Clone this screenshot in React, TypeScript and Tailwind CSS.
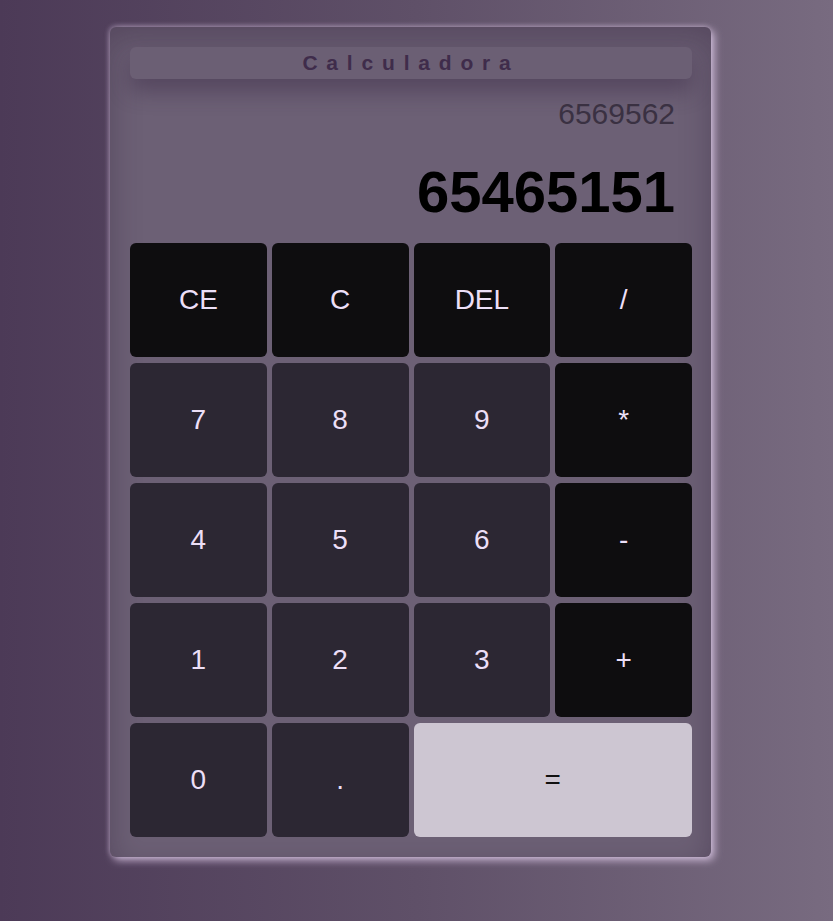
import React from 'react';

const keys: { label: string; kind: 'op' | 'num' | 'eq'; span?: boolean }[] = [
  { label: 'CE', kind: 'op' },
  { label: 'C', kind: 'op' },
  { label: 'DEL', kind: 'op' },
  { label: '/', kind: 'op' },
  { label: '7', kind: 'num' },
  { label: '8', kind: 'num' },
  { label: '9', kind: 'num' },
  { label: '*', kind: 'op' },
  { label: '4', kind: 'num' },
  { label: '5', kind: 'num' },
  { label: '6', kind: 'num' },
  { label: '-', kind: 'op' },
  { label: '1', kind: 'num' },
  { label: '2', kind: 'num' },
  { label: '3', kind: 'num' },
  { label: '+', kind: 'op' },
  { label: '0', kind: 'num' },
  { label: '.', kind: 'num' },
  { label: '=', kind: 'eq', span: true },
];

const kindClass = {
  op: 'bg-[#0e0d0f] text-[#ecdff7]',
  num: 'bg-[#2c2733] text-[#ecdff7]',
  eq: 'bg-[#cdc6d2] text-[#111]',
};

export default function App() {
  return (
    <div className="min-h-screen w-full bg-gradient-to-r from-[#4c3a57] via-[#5f5068] to-[#786b80] pt-[27px] pl-[110px] font-['Liberation_Sans',Arial,sans-serif]">
      <div className="w-[601px] rounded-md bg-[#6c6075] pl-5 pr-[19px] pt-5 pb-5 shadow-[3px_3px_8px_rgba(225,205,235,0.85),-1px_-1px_5px_rgba(225,205,235,0.35),inset_0_12px_30px_rgba(45,30,55,0.35)]">
        {/* title */}
        <div className="h-8 rounded-md bg-[#6b5f74] flex items-center justify-center shadow-[0_12px_22px_rgba(55,38,66,0.45)]">
          <span className="text-[21px] font-bold tracking-[0.42em] text-[#3f2c4b]">Calculadora</span>
        </div>

        {/* display */}
        <div className="h-[164px] pr-[17px] flex flex-col items-end">
          <div className="mt-[20px] text-[30px] leading-[30px] text-[#3a3142]">6569562</div>
          <div className="mt-[34px] text-[58px] leading-[58px] font-bold text-black">65465151</div>
        </div>

        {/* keys */}
        <div className="grid grid-cols-4 gap-x-[5px] gap-y-[6px]">
          {keys.map((k) => (
            <button
              key={k.label}
              className={`h-[114px] rounded-md text-[28px] flex items-center justify-center ${kindClass[k.kind]} ${k.span ? 'col-span-2' : ''}`}
            >
              {k.label}
            </button>
          ))}
        </div>
      </div>
    </div>
  );
}
